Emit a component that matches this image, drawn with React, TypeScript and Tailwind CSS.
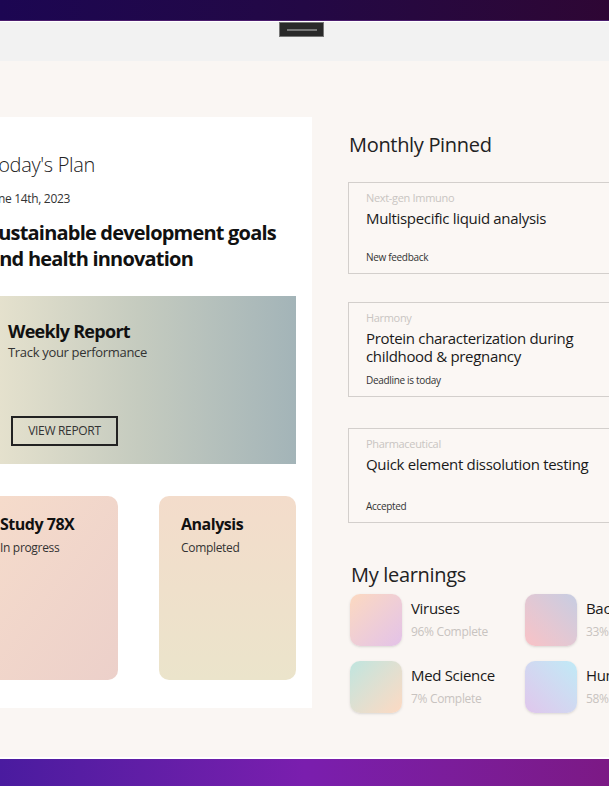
import React from 'react'

const pinned = [
  { tag: 'Next-gen Immuno', title: 'Multispecific liquid analysis', note: 'New feedback', h: 'h-[92px]' },
  { tag: 'Harmony', title: 'Protein characterization during childhood & pregnancy', note: 'Deadline is today', h: 'h-[95px]' },
  { tag: 'Pharmaceutical', title: 'Quick element dissolution testing', note: 'Accepted', h: 'h-[95px]' },
]

const learnings = [
  { name: 'Viruses', pct: '96% Complete', bg: 'bg-gradient-to-br from-[#fcd9c0] to-[#e3c2e8]' },
  { name: 'Bacteria', pct: '33% Complete', bg: 'bg-gradient-to-bl from-[#c6cde2] to-[#f9c2c6]' },
  { name: 'Med Science', pct: '7% Complete', bg: 'bg-gradient-to-br from-[#bfe5df] to-[#fdd9c2]' },
  { name: 'Human', pct: '58% Complete', bg: 'bg-gradient-to-tr from-[#e0c6ec] to-[#bfeaf6]' },
]

export default function App() {
  return (
    <div className="flex h-[786px] w-[609px] flex-col overflow-hidden bg-[#faf6f3] font-['Open_Sans',sans-serif] tracking-[-0.02em] text-[#1a1a1a]">
      {/* window chrome */}
      <div className="h-[21px] shrink-0 border-b border-[#4b1d6e] bg-gradient-to-r from-[#1c0652] via-[#230845] to-[#2e0634]" />
      <div className="h-[40px] shrink-0 border-t border-white bg-[#f2f2f2]">
        <div className="ml-[279px] flex h-[15px] w-[45px] items-center justify-center border border-[#777] bg-[#2a2a2a]">
          <div className="h-[2px] w-[30px] bg-[#777]" />
        </div>
      </div>

      <div className="flex flex-1 items-start">
        {/* Today's plan */}
        <div className="ml-[-35px] mt-[56px] w-[347px] shrink-0 bg-white px-4 pb-[28px] pt-[34px]">
          <div className="pl-[7px]">
            <h2 className="text-[20px] font-light leading-[28px] text-[#222]">Today's Plan</h2>
            <p className="mt-[12px] text-[12px] leading-[16px] text-[#333]">June 14th, 2023</p>
            <h1 className="mt-[13px] w-[310px] text-[20px] font-bold leading-[26px] tracking-[-0.04em] text-[#111]">
              Sustainable development goals and health innovation
            </h1>
          </div>

          <div className="mt-[24px] h-[168px] bg-gradient-to-r from-[#e9e4cf] via-[#c5cbbf] to-[#a3b4b8] pl-[27px] pt-[23px]">
            <h3 className="text-[18px] font-bold leading-[24px] tracking-[-0.04em] text-[#111]">Weekly Report</h3>
            <p className="text-[13px] leading-[18px] text-[#333]">Track your performance</p>
            <button className="ml-[3px] mt-[55px] h-[30px] w-[107px] border-2 border-[#222] text-[12px] uppercase text-[#333]">
              View report
            </button>
          </div>

          <div className="mt-[32px] flex gap-[41px]">
            <div className="h-[184px] w-[137px] rounded-[10px] bg-gradient-to-br from-[#f6dccb] to-[#ecd0ca] pl-[19px] pt-[17px]">
              <h3 className="text-[16px] font-bold leading-[22px] tracking-[-0.03em] text-[#111]">Study 78X</h3>
              <p className="mt-[5px] text-[12px] leading-[16px] text-[#333]">In progress</p>
            </div>
            <div className="h-[184px] w-[137px] rounded-[10px] bg-gradient-to-b from-[#f3dccb] to-[#ebe4cb] pl-[22px] pt-[17px]">
              <h3 className="text-[16px] font-bold leading-[22px] tracking-[-0.03em] text-[#111]">Analysis</h3>
              <p className="mt-[5px] text-[12px] leading-[16px] text-[#333]">Completed</p>
            </div>
          </div>
        </div>

        {/* right column */}
        <div className="ml-[36px] w-[300px] shrink-0 pt-[70px]">
          <h2 className="pl-px text-[20px] leading-[28px] text-[#222]">Monthly Pinned</h2>
          <div className="mt-[23px] flex flex-col">
            {pinned.map((p, i) => (
              <div
                key={p.tag}
                className={`${p.h} ${i === 1 ? 'mt-[28px]' : i === 2 ? 'mt-[31px]' : ''} flex flex-col border border-[#d3cfcc] bg-[#fbf7f4] pb-[10px] pl-[17px] pt-[8px]`}
              >
                <span className="text-[11px] leading-[14px] text-[#c9c5c2]">{p.tag}</span>
                <span className="mt-[4px] w-[232px] text-[15px] leading-[18px] text-[#1a1a1a]">{p.title}</span>
                <span className="mt-auto text-[10px] leading-[12px] text-[#333]">{p.note}</span>
              </div>
            ))}
          </div>

          <h2 className="mt-[38px] pl-[3px] text-[20px] leading-[28px] text-[#222]">My learnings</h2>
          <div className="mt-[5px] grid w-[350px] grid-cols-[175px_175px] gap-y-[15px] pl-[2px]">
            {learnings.map((l) => (
              <div key={l.name} className="flex items-start gap-[9px]">
                <div className={`h-[52px] w-[52px] rounded-[10px] shadow-sm ${l.bg}`} />
                <div className="pt-[4px]">
                  <div className="text-[15px] leading-[20px] text-[#1a1a1a]">{l.name}</div>
                  <div className="mt-[6px] text-[12px] leading-[16px] text-[#c8c3c0]">{l.pct}</div>
                </div>
              </div>
            ))}
          </div>
        </div>
      </div>

      <div className="h-[29px] shrink-0 border-t-2 border-white bg-gradient-to-r from-[#4a1b9f] via-[#7a1eae] to-[#7c1985]" />
    </div>
  )
}
